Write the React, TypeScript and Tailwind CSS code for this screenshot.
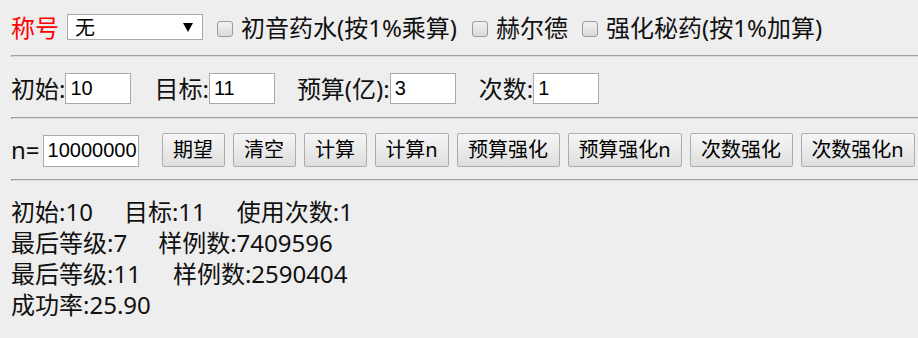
import React from 'react';

const FONT = '"Noto Sans", "Noto Sans CJK SC", sans-serif';

// Флажок в стиле старого Windows-чекбокса
const Check = () => (
    <span className="inline-block w-[16px] h-[16px] rounded-[3px] border border-[#9c9c9c] bg-gradient-to-b from-[#f2f2f2] to-[#d9d9d9] shrink-0" />
);

const Field = ({ value, w }: { value: string; w: string }) => (
    <span
        className={`inline-flex items-center ${w} h-[31px] bg-white border border-[#a9a9a9] pl-[4px] text-[20px] text-black`}
        style={{ fontFamily: '"Liberation Sans", Arial, sans-serif' }}
    >
        {value}
    </span>
);

const Btn = ({ children, w }: { children: React.ReactNode; w: string }) => (
    <button className={`${w} h-[34px] border border-[#adadad] rounded-[2px] bg-gradient-to-b from-[#f6f6f6] to-[#dedede] text-[20px] leading-[32px] text-black`}>
        {children}
    </button>
);

const Rule = () => (
    <div className="h-[2px] border-t border-l border-[#a0a0a0] bg-[#dcdcdc]" />
);

export default function App() {
    return (
        <div
            className="min-h-screen bg-[#eeeeee] pl-[11px] pt-[14px] text-[24px] leading-[31px] text-[#111]"
            style={{ fontFamily: FONT }}
        >
            {/* Звание и бонусы */}
            <div className="flex items-center h-[26px]">
                <span className="text-[#ff0000]">称号</span>
                <div className="ml-[8px] relative w-[136px] h-[26px] bg-white border border-[#a9a9a9] flex items-center pl-[7px] text-[20px] text-black">
                    无
                    <svg className="absolute right-[9px] top-[8px]" width="10" height="9" viewBox="0 0 10 9">
                        <polygon points="0,0 10,0 5,9" fill="#000" />
                    </svg>
                </div>
                <span className="ml-[14px]"><Check /></span>
                <span className="ml-[8px]">初音药水(按1%乘算)</span>
                <span className="ml-[15px]"><Check /></span>
                <span className="ml-[8px]">赫尔德</span>
                <span className="ml-[14px]"><Check /></span>
                <span className="ml-[8px]">强化秘药(按1%加算)</span>
            </div>

            <div className="mt-[15px]"><Rule /></div>

            {/* Параметры */}
            <div className="mt-[16px] flex items-center h-[31px]">
                <span>初始:</span>
                <Field value="10" w="w-[66px]" />
                <span className="ml-[23px]">目标:</span>
                <Field value="11" w="w-[66px]" />
                <span className="ml-[22px]">预算(亿):</span>
                <Field value="3" w="w-[66px]" />
                <span className="ml-[23px]">次数:</span>
                <Field value="1" w="w-[66px]" />
            </div>

            <div className="mt-[13px]"><Rule /></div>

            {/* Кнопки */}
            <div className="mt-[13px] flex items-center h-[35px]">
                <span>n=</span>
                <span className="ml-[3px]"><Field value="10000000" w="w-[96px] h-[32px]" /></span>
                <div className="ml-[23px] flex gap-[8px]">
                    <Btn w="w-[63px]">期望</Btn>
                    <Btn w="w-[63px]">清空</Btn>
                    <Btn w="w-[63px]">计算</Btn>
                    <Btn w="w-[74px]">计算n</Btn>
                    <Btn w="w-[103px]">预算强化</Btn>
                    <Btn w="w-[114px]">预算强化n</Btn>
                    <Btn w="w-[103px]">次数强化</Btn>
                    <Btn w="w-[114px]">次数强化n</Btn>
                </div>
            </div>

            <div className="mt-[12px]"><Rule /></div>

            {/* Результаты */}
            <div className="mt-[15px]">
                <div>
                    <span>初始:10</span>
                    <span className="ml-[31px]">目标:11</span>
                    <span className="ml-[31px]">使用次数:1</span>
                </div>
                <div>
                    <span>最后等级:7</span>
                    <span className="ml-[31px]">样例数:7409596</span>
                </div>
                <div>
                    <span>最后等级:11</span>
                    <span className="ml-[32px]">样例数:2590404</span>
                </div>
                <div>成功率:25.90</div>
            </div>
        </div>
    );
}
